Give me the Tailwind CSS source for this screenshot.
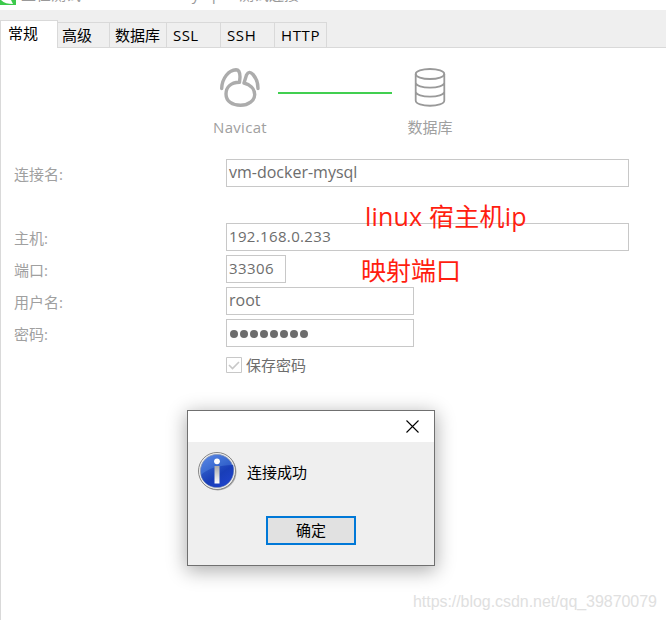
<!DOCTYPE html>
<html lang="zh-CN">
<head>
<meta charset="utf-8">
<title>编辑连接</title>
<script src="https://cdn.jsdelivr.net/npm/@tailwindcss/browser@4"></script>
</head>
<body class="relative h-[620px] w-[666px] overflow-hidden bg-white font-['Open_Sans','Noto_Sans_CJK_SC',sans-serif] text-[15px] font-normal text-[#6d6d6d]">
  <header class="flex h-[10px] items-end overflow-hidden bg-white text-[#999]">
    <svg class="h-[5px] w-[16px] shrink-0 self-start" viewBox="0 0 16 5"><path d="M0 0h16v5H0z" fill="#3cc94b"/><path d="M1 0h10l2 4C8 4 4 3 1 0z" fill="#fff"/></svg>
    <div class="ml-[5px] flex h-5 w-full items-center self-end whitespace-pre leading-5 -translate-y-[6px]"><span class="w-[78px]">正在测试</span><span class="w-[140px]">vm-docker-mysql -</span><span>测试连接</span></div>
  </header>
  <nav class="flex h-[38px] items-end bg-[#efefef] leading-5 text-black">
    <div class="z-10 h-[28px] w-[58px] border-x border-t border-[#d9d9d9] bg-white pl-[7px] pt-[2px]">常规</div>
    <div class="h-[26px] w-[52px] border border-l-0 border-[#d9d9d9] pl-[4px] pt-[2px]">高级</div>
    <div class="h-[26px] w-[57px] whitespace-nowrap border border-l-0 border-[#d9d9d9] pl-[5px] pt-[2px]">数据库</div>
    <div class="h-[26px] w-[54px] border border-l-0 border-[#d9d9d9] pl-[6px] pt-[2px] tracking-[0.4px]">SSL</div>
    <div class="h-[26px] w-[54px] border border-l-0 border-[#d9d9d9] pl-[6px] pt-[2px] tracking-[0.6px]">SSH</div>
    <div class="h-[26px] w-[52px] border border-l-0 border-[#d9d9d9] pl-[6px] pt-[2px] tracking-[0.6px]">HTTP</div>
    <div class="h-px flex-1 bg-[#d9d9d9]"></div>
  </nav>
  <main class="h-[572px] border-l border-[#d9d9d9]">
    <section class="flex h-[111px] pl-[209px] pt-[18px] text-[#a0a0a0]">
      <div class="flex w-[60px] flex-col items-center">
        <svg class="h-[44px] w-[44px]" viewBox="0 0 44 44" fill="none" stroke="#acacac" stroke-width="3.4" stroke-linecap="round" stroke-linejoin="round"><path d="M3.700 22.500C4 12 11 4 18 3.700Q22 3.700 22 11L21.500 16.300C12 16.500 8 22 8 28C8 35.500 14.500 39.300 22.500 39.300C30.500 39.300 36.700 34.500 36.700 28.500C36.700 22.500 31.500 18.500 26 17L28.500 9Q31 4 35 8.500Q40 14 40 22.500"/></svg>
        <div class="mt-[7px] leading-5 tracking-[0.3px]">Navicat</div>
      </div>
      <div class="ml-[8px] mt-[26px] h-[2px] w-[114px] bg-[#41cf50]"></div>
      <div class="ml-[8px] flex w-[60px] flex-col items-center">
        <svg class="h-[44px] w-[44px]" viewBox="0 0 44 44" fill="none" stroke="#999" stroke-width="1.8"><ellipse cx="22" cy="8" rx="14.300" ry="5"/><path d="M7.700 8V34.500C7.700 41.500 36.300 41.500 36.300 34.500V8M7.700 16.500C7.700 23.300 36.300 23.300 36.300 16.500M7.700 25.500C7.700 32.300 36.300 32.300 36.300 25.500"/></svg>
        <div class="mt-[7px] leading-5">数据库</div>
      </div>
    </section>
    <form class="grid grid-cols-[212px_403px] pl-[13px] leading-5 text-[#a0a0a0]">
      <label class="h-[64px] pt-[5px]">连接名:</label><div class="h-[28px] w-[403px] border border-[#c8c8c8] pl-[2px] pt-[2px] text-[16px] text-[#6d6d6d]">vm-docker-mysql</div>
      <label class="h-[32px] pt-[5px]">主机:</label><div class="h-[28px] w-[403px] border border-[#c8c8c8] pl-[2px] pt-[2px] tracking-[0.35px] text-[#6d6d6d]">192.168.0.233</div>
      <label class="h-[32px] pt-[5px]">端口:</label><div class="h-[28px] w-[60px] border border-[#c8c8c8] pl-[2px] pt-[2px] tracking-[0.4px] text-[#6d6d6d]">33306</div>
      <label class="h-[32px] pt-[5px]">用户名:</label><div class="h-[28px] w-[188px] border border-[#c8c8c8] pl-[2px] pt-[2px] text-[16px] text-[#6d6d6d]">root</div>
      <label class="h-[32px] pt-[5px]">密码:</label><div class="flex h-[28px] w-[188px] items-center gap-[2px] border border-[#c8c8c8] pl-[3px] pt-px"><i class="size-2 rounded-full bg-[#6d6d6d]"></i><i class="size-2 rounded-full bg-[#6d6d6d]"></i><i class="size-2 rounded-full bg-[#6d6d6d]"></i><i class="size-2 rounded-full bg-[#6d6d6d]"></i><i class="size-2 rounded-full bg-[#6d6d6d]"></i><i class="size-2 rounded-full bg-[#6d6d6d]"></i><i class="size-2 rounded-full bg-[#6d6d6d]"></i><i class="size-2 rounded-full bg-[#6d6d6d]"></i></div>
      <label class="col-start-2 flex h-[28px] items-center text-[#6d6d6d]"><svg class="mr-[4px] size-4" viewBox="0 0 16 16" fill="none" stroke="#c8c8c8"><path d="M.5.5h15v15H.5z"/><path d="M3 8l3.500 3.500L13 5" stroke-width="1.6"/></svg>保存密码</label>
    </form>
  </main>
  <div class="absolute left-[365px] top-[199px] whitespace-nowrap text-[25px] leading-[34px] tracking-[0.2px] text-[#ff1e10]">linux 宿主机ip</div>
  <div class="absolute left-[361px] top-[253px] whitespace-nowrap text-[25px] leading-[34px] text-[#ff1e10]">映射端口</div>
  <section class="absolute left-[187px] top-[410px] h-[156px] w-[248px] border border-[#707070] bg-[#efefef] text-black shadow-[0_4px_18px_1px_rgba(0,0,0,0.32)]">
    <div class="flex h-[31px] items-center justify-end bg-white pr-[15px]"><svg class="size-[13px]" viewBox="0 0 13 13" fill="none" stroke="#000" stroke-width="1.1"><path d="M.5.500l12 12M12.500.500l-12 12"/></svg></div>
    <div class="flex h-[74px] pl-[9px] pt-[9px]">
      <svg class="size-10" viewBox="0 0 40 40"><defs><linearGradient id="ball" x2="0.6" y2="1"><stop stop-color="#5c8ae8"/><stop offset=".5" stop-color="#3868cf"/><stop offset="1" stop-color="#1c3fbd"/></linearGradient><linearGradient id="shade" x2="1" y2="1"><stop stop-color="#2550bd" stop-opacity=".5"/><stop offset=".5" stop-color="#1539b5"/><stop offset="1" stop-color="#2348d5"/></linearGradient><linearGradient id="stem" x2="0" y2="1"><stop stop-color="#aaa"/><stop offset="1" stop-color="#fff"/></linearGradient></defs><circle cx="20.800" cy="20.800" r="18.700" fill="#aaa"/><circle cx="20" cy="20" r="18.500" fill="#f3f3f3" stroke="#858585"/><circle cx="20" cy="20" r="16.600" fill="url(#ball)" stroke="#8795b5" stroke-width=".8"/><path d="M4 24Q14 14 36.200 14C38 27 31 36 20 36C11 36 5 30 4 24Z" fill="url(#shade)" opacity=".85"/><circle cx="20" cy="10.300" r="2.900" fill="#fff"/><path d="M17.500 15h5v17.500h-5z" fill="url(#stem)"/></svg>
      <div class="ml-[10px] mt-[11px] leading-5">连接成功</div>
    </div>
    <button class="ml-[78px] block h-[29px] w-[90px] border-2 border-[#0078d7] bg-[#e1e1e1] leading-[25px]">确定</button>
  </section>
  <div class="absolute left-[413px] top-[592px] whitespace-nowrap font-['Liberation_Sans',sans-serif] text-[16px] leading-5 tracking-[-0.05px] text-[#e0e0e0]">https://blog.csdn.net/qq_39870079</div>
</body>
</html>
